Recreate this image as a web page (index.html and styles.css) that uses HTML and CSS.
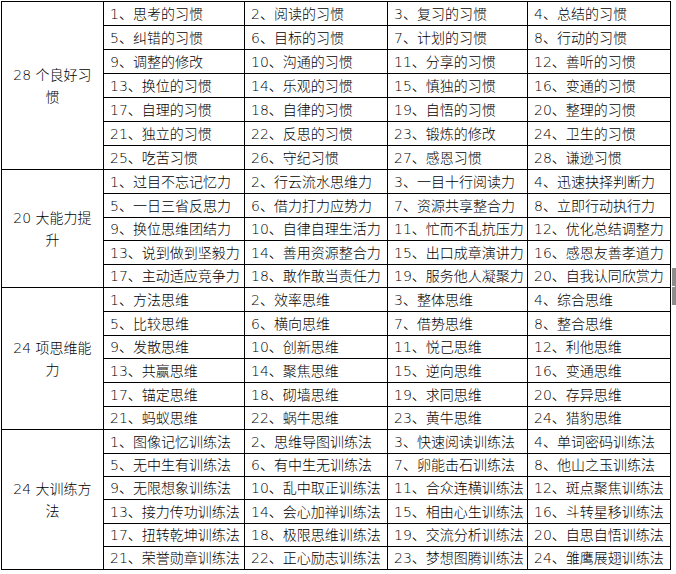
FILE: index.html
```html
<!DOCTYPE html>
<html lang="zh-CN">
<head>
<meta charset="utf-8">
<title>习惯与能力</title>
<link rel="stylesheet" href="styles.css">
</head>
<body>
<table class="grid">
  <colgroup>
    <col class="c0"><col class="c1"><col class="c2"><col class="c3"><col class="c4">
  </colgroup>
  <tbody>
    <tr class="h24"><td class="label" rowspan="7">28 个良好习惯</td><td>1、思考的习惯</td><td>2、阅读的习惯</td><td>3、复习的习惯</td><td>4、总结的习惯</td></tr>
    <tr class="h24"><td>5、纠错的习惯</td><td>6、目标的习惯</td><td>7、计划的习惯</td><td>8、行动的习惯</td></tr>
    <tr class="h24"><td>9、调整的修改</td><td>10、沟通的习惯</td><td>11、分享的习惯</td><td>12、善听的习惯</td></tr>
    <tr class="h24"><td>13、换位的习惯</td><td>14、乐观的习惯</td><td>15、慎独的习惯</td><td>16、变通的习惯</td></tr>
    <tr class="h24"><td>17、自理的习惯</td><td>18、自律的习惯</td><td>19、自悟的习惯</td><td>20、整理的习惯</td></tr>
    <tr class="h24"><td>21、独立的习惯</td><td>22、反思的习惯</td><td>23、锻炼的修改</td><td>24、卫生的习惯</td></tr>
    <tr class="h24"><td>25、吃苦习惯</td><td>26、守纪习惯</td><td>27、感恩习惯</td><td>28、谦逊习惯</td></tr>

    <tr class="h24"><td class="label" rowspan="5">20 大能力提升</td><td>1、过目不忘记忆力</td><td>2、行云流水思维力</td><td>3、一目十行阅读力</td><td>4、迅速抉择判断力</td></tr>
    <tr class="h24"><td>5、一日三省反思力</td><td>6、借力打力应势力</td><td>7、资源共享整合力</td><td>8、立即行动执行力</td></tr>
    <tr class="h23"><td>9、换位思维团结力</td><td>10、自律自理生活力</td><td>11、忙而不乱抗压力</td><td>12、优化总结调整力</td></tr>
    <tr class="h24"><td>13、说到做到坚毅力</td><td>14、善用资源整合力</td><td>15、出口成章演讲力</td><td>16、感恩友善孝道力</td></tr>
    <tr class="h23"><td>17、主动适应竞争力</td><td>18、敢作敢当责任力</td><td>19、服务他人凝聚力</td><td>20、自我认同欣赏力</td></tr>

    <tr class="h24"><td class="label" rowspan="6">24 项思维能力</td><td>1、方法思维</td><td>2、效率思维</td><td>3、整体思维</td><td>4、综合思维</td></tr>
    <tr class="h24"><td>5、比较思维</td><td>6、横向思维</td><td>7、借势思维</td><td>8、整合思维</td></tr>
    <tr class="h23"><td>9、发散思维</td><td>10、创新思维</td><td>11、悦己思维</td><td>12、利他思维</td></tr>
    <tr class="h24"><td>13、共赢思维</td><td>14、聚焦思维</td><td>15、逆向思维</td><td>16、变通思维</td></tr>
    <tr class="h24"><td>17、锚定思维</td><td>18、砌墙思维</td><td>19、求同思维</td><td>20、存异思维</td></tr>
    <tr class="h23"><td>21、蚂蚁思维</td><td>22、蜗牛思维</td><td>23、黄牛思维</td><td>24、猎豹思维</td></tr>

    <tr class="h24"><td class="label" rowspan="6">24 大训练方法</td><td>1、图像记忆训练法</td><td>2、思维导图训练法</td><td>3、快速阅读训练法</td><td>4、单词密码训练法</td></tr>
    <tr class="h23"><td>5、无中生有训练法</td><td>6、有中生无训练法</td><td>7、卵能击石训练法</td><td>8、他山之玉训练法</td></tr>
    <tr class="h23"><td>9、无限想象训练法</td><td>10、乱中取正训练法</td><td>11、合众连横训练法</td><td>12、斑点聚焦训练法</td></tr>
    <tr class="h24"><td>13、接力传功训练法</td><td>14、会心加禅训练法</td><td>15、相由心生训练法</td><td>16、斗转星移训练法</td></tr>
    <tr class="h23"><td>17、扭转乾坤训练法</td><td>18、极限思维训练法</td><td>19、交流分析训练法</td><td>20、自思自悟训练法</td></tr>
    <tr class="h23"><td>21、荣誉勋章训练法</td><td>22、正心励志训练法</td><td>23、梦想图腾训练法</td><td>24、雏鹰展翅训练法</td></tr>
  </tbody>
</table>
<div class="handle"><span class="handle-mark"></span></div>
</body>
</html>
```

FILE: styles.css
```css
html, body {
  margin: 0;
  padding: 0;
  background: #ffffff;
}

body {
  font-family: "DejaVu Sans", "Noto Sans CJK SC", sans-serif;
  font-size: 14px;
  font-weight: 300;
  color: #000000;
}

.grid {
  margin: 1px 0 0 1px;
  border-collapse: separate;
  border-spacing: 0;
  table-layout: fixed;
  width: 670px;
  border-left: 1px solid #000;
  border-top: 1px solid #000;
}

.grid td {
  box-sizing: border-box;
  border-right: 1px solid #000;
  border-bottom: 1px solid #000;
  padding: 0 0 0 6px;
  line-height: 20px;
  white-space: nowrap;
  overflow: hidden;
  vertical-align: middle;
}

.grid td.label {
  padding: 0 9px;
  text-align: center;
  white-space: normal;
  line-height: 22px;
  word-break: break-all;
}

.c0 { width: 102px; }
.c1 { width: 141px; }
.c2 { width: 143px; }
.c3 { width: 140px; }
.c4 { width: 143px; }

.h24 { height: 24px; }
.h23 { height: 23px; }

.handle {
  position: absolute;
  left: 672px;
  top: 268px;
  width: 4px;
  height: 37px;
  background: #8c8c8c;
  display: flex;
  align-items: center;
}

.handle-mark {
  display: block;
  width: 3px;
  height: 1px;
  background: #ffffff;
}
```
